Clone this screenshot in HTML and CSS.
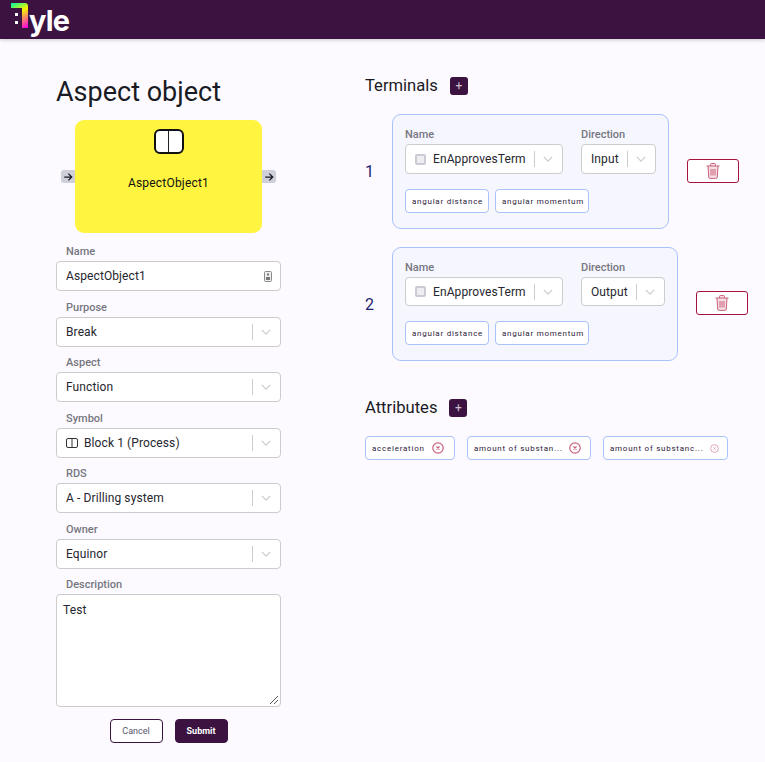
FILE: index.html
```html
<!DOCTYPE html>
<html lang="en">
<head>
  <meta charset="UTF-8" />
  <title>Aspect object</title>
  <link rel="stylesheet" href="styles.css">
</head>
<body>

  <header class="topbar">
    <div class="logo">
      <svg class="logo-mark" width="29" height="29" viewBox="0 0 29 29">
        <defs>
          <linearGradient id="logoFill" gradientUnits="userSpaceOnUse" x1="12" y1="3" x2="26" y2="28">
            <stop offset="0" stop-color="#00f59b" />
            <stop offset="0.4" stop-color="#f5f500" />
            <stop offset="1" stop-color="#ff00e0" />
          </linearGradient>
        </defs>
        <path d="M11 3h14a3 3 0 0 1 3 3v22h-6V8H11z" fill="url(#logoFill)" />
        <rect x="15" y="13" width="3" height="3" fill="#fff" />
        <rect x="15" y="21" width="3" height="3" fill="#fff" />
      </svg>
      <span class="logo-text">yle</span>
    </div>
  </header>

  <main class="page">
    <section class="left">
      <h1>Aspect object</h1>

      <div class="preview">
        <span class="port port-in"><svg width="10" height="10" viewBox="0 0 12 12"><path d="M1.5 6h9M6.5 2l4 4-4 4" class="arrow" /></svg></span>
        <div class="node">
          <span class="node-symbol"></span>
          <span class="node-name">AspectObject1</span>
        </div>
        <span class="port port-out"><svg width="10" height="10" viewBox="0 0 12 12"><path d="M1.5 6h9M6.5 2l4 4-4 4" class="arrow" /></svg></span>
      </div>

      <div class="field">
        <label>Name</label>
        <div class="control input">
          <span class="value">AspectObject1</span>
          <svg class="key-icon" width="8" height="11" viewBox="0 0 8 11"><rect x="0.5" y="0.5" width="7" height="10" rx="1" fill="#efefef" stroke="#8a8a8a" /><rect x="3" y="2.5" width="2" height="2" fill="#777" /><rect x="2" y="6" width="4" height="3" fill="#777" /></svg>
        </div>
      </div>

      <div class="field">
        <label>Purpose</label>
        <div class="control">
          <span class="value">Break</span>
          <span class="sep"></span>
          <svg class="chev" width="10" height="6" viewBox="0 0 12 7"><path d="M1 1l5 5 5-5" /></svg>
        </div>
      </div>

      <div class="field">
        <label>Aspect</label>
        <div class="control">
          <span class="value">Function</span>
          <span class="sep"></span>
          <svg class="chev" width="10" height="6" viewBox="0 0 12 7"><path d="M1 1l5 5 5-5" /></svg>
        </div>
      </div>

      <div class="field">
        <label>Symbol</label>
        <div class="control">
          <svg class="block-icon" width="12" height="10" viewBox="0 0 12 10"><rect x="0.5" y="0.5" width="11" height="9" rx="1.5" /><path d="M6 0.5v9" /></svg>
          <span class="value">Block 1 (Process)</span>
          <span class="sep"></span>
          <svg class="chev" width="10" height="6" viewBox="0 0 12 7"><path d="M1 1l5 5 5-5" /></svg>
        </div>
      </div>

      <div class="field">
        <label>RDS</label>
        <div class="control">
          <span class="value">A - Drilling system</span>
          <span class="sep"></span>
          <svg class="chev" width="10" height="6" viewBox="0 0 12 7"><path d="M1 1l5 5 5-5" /></svg>
        </div>
      </div>

      <div class="field">
        <label>Owner</label>
        <div class="control">
          <span class="value">Equinor</span>
          <span class="sep"></span>
          <svg class="chev" width="10" height="6" viewBox="0 0 12 7"><path d="M1 1l5 5 5-5" /></svg>
        </div>
      </div>

      <div class="field">
        <label>Description</label>
        <div class="control textarea">
          <span class="value">Test</span>
          <svg class="grip" width="10" height="10" viewBox="0 0 10 10"><path d="M1 9l8-8M5 9l4-4" /></svg>
        </div>
      </div>

      <div class="actions">
        <button class="btn btn-cancel">Cancel</button>
        <button class="btn btn-submit">Submit</button>
      </div>
    </section>

    <section class="right">
      <div class="section-head">
        <h2>Terminals</h2>
        <button class="add">+</button>
      </div>

      <div class="terminal">
        <span class="index">1</span>
        <div class="terminal-card">
          <div class="terminal-fields">
            <div class="tfield tfield-name">
              <label>Name</label>
              <div class="control">
                <span class="term-icon"></span>
                <span class="value">EnApprovesTerm</span>
                <span class="sep"></span>
                <svg class="chev" width="10" height="6" viewBox="0 0 12 7"><path d="M1 1l5 5 5-5" /></svg>
              </div>
            </div>
            <div class="tfield tfield-dir">
              <label>Direction</label>
              <div class="control">
                <span class="value">Input</span>
                <span class="sep"></span>
                <svg class="chev" width="10" height="6" viewBox="0 0 12 7"><path d="M1 1l5 5 5-5" /></svg>
              </div>
            </div>
          </div>
          <div class="chips">
            <span class="chip chip-a">angular distance</span>
            <span class="chip chip-b">angular momentum</span>
          </div>
        </div>
        <button class="trash">
          <svg width="14" height="16" viewBox="0 0 14 16"><path d="M0.5 3h13M4.5 3V1.5a1 1 0 0 1 1-1h3a1 1 0 0 1 1 1V3M2 3l0.7 11a1.5 1.5 0 0 0 1.5 1.4h5.6a1.5 1.5 0 0 0 1.5-1.4L12 3M5 6v6.5M7 6v6.5M9 6v6.5" /></svg>
        </button>
      </div>

      <div class="terminal">
        <span class="index">2</span>
        <div class="terminal-card wide">
          <div class="terminal-fields">
            <div class="tfield tfield-name">
              <label>Name</label>
              <div class="control">
                <span class="term-icon"></span>
                <span class="value">EnApprovesTerm</span>
                <span class="sep"></span>
                <svg class="chev" width="10" height="6" viewBox="0 0 12 7"><path d="M1 1l5 5 5-5" /></svg>
              </div>
            </div>
            <div class="tfield tfield-dir">
              <label>Direction</label>
              <div class="control">
                <span class="value">Output</span>
                <span class="sep"></span>
                <svg class="chev" width="10" height="6" viewBox="0 0 12 7"><path d="M1 1l5 5 5-5" /></svg>
              </div>
            </div>
          </div>
          <div class="chips">
            <span class="chip chip-a">angular distance</span>
            <span class="chip chip-b">angular momentum</span>
          </div>
        </div>
        <button class="trash">
          <svg width="14" height="16" viewBox="0 0 14 16"><path d="M0.5 3h13M4.5 3V1.5a1 1 0 0 1 1-1h3a1 1 0 0 1 1 1V3M2 3l0.7 11a1.5 1.5 0 0 0 1.5 1.4h5.6a1.5 1.5 0 0 0 1.5-1.4L12 3M5 6v6.5M7 6v6.5M9 6v6.5" /></svg>
        </button>
      </div>

      <div class="section-head attributes-head">
        <h2>Attributes</h2>
        <button class="add">+</button>
      </div>

      <div class="attributes">
        <span class="chip attr attr-1">
          <span class="attr-name">acceleration</span>
          <svg width="12" height="12" viewBox="0 0 12 12"><circle cx="6" cy="6" r="5.2" /><path d="M4.5 4.5l3 3M7.5 4.5l-3 3" /></svg>
        </span>
        <span class="chip attr attr-2">
          <span class="attr-name">amount of substan...</span>
          <svg width="12" height="12" viewBox="0 0 12 12"><circle cx="6" cy="6" r="5.2" /><path d="M4.5 4.5l3 3M7.5 4.5l-3 3" /></svg>
        </span>
        <span class="chip attr attr-3">
          <span class="attr-name">amount of substanc...</span>
          <svg class="small" width="9" height="9" viewBox="0 0 12 12"><circle cx="6" cy="6" r="5.2" /><path d="M4.5 4.5l3 3M7.5 4.5l-3 3" /></svg>
        </span>
      </div>
    </section>
  </main>

</body>
</html>
```

FILE: styles.css
```css
* {
  box-sizing: border-box;
}

body {
  margin: 0;
  font-family: Roboto, Arial, sans-serif;
  background-color: #fcfaff;
  color: #1d1b20;
}

.topbar {
  height: 39px;
  background-color: #3b1240;
  box-shadow: 0 1px 4px rgba(0,0,0,0.2);
}

.logo {
  display: flex;
  align-items: flex-start;
  height: 39px;
  overflow: hidden;
}

.logo-mark {
  flex: none;
}

.logo-text {
  margin-top: 3px;
  font-family: Inter, Roboto, sans-serif;
  font-size: 29px;
  font-weight: 700;
  line-height: 36px;
  letter-spacing: -0.8px;
  color: #fff;
}

.page {
  display: flex;
  padding: 36px 0 0 56px;
}

.left {
  width: 225px;
  flex: none;
}

.right {
  margin-left: 84px;
  flex: none;
  width: 400px;
}

h1 {
  margin: 1px 0 0;
  font-size: 27px;
  font-weight: 400;
  line-height: 33px;
  color: #1a1a24;
}

h2 {
  margin: 0;
  font-size: 16.6px;
  font-weight: 400;
  line-height: 20px;
  color: #1a1a24;
}

.preview {
  display: flex;
  align-items: center;
  margin: 11px 0 0 5px;
  height: 113px;
}

.node {
  width: 187px;
  height: 113px;
  background-color: #fff540;
  border-radius: 9px;
  display: flex;
  flex-direction: column;
  align-items: center;
  padding-top: 9px;
}

.node-symbol {
  width: 30px;
  height: 25px;
  border: 2px solid #111;
  border-radius: 6px;
  background: linear-gradient(#222, #222) center / 1px 100% no-repeat #fff;
}

.node-name {
  margin-top: 21px;
  font-size: 12px;
  font-weight: 400;
  letter-spacing: 0.2px;
  line-height: 16px;
  color: #111;
}

.port {
  width: 14px;
  height: 13px;
  background-color: #cfcfd9;
  display: flex;
  align-items: center;
  justify-content: center;
}

.port-in {
  border-radius: 3px 0 0 3px;
}

.port-out {
  border-radius: 0 3px 3px 0;
}

.arrow {
  fill: none;
  stroke: #1a1a24;
  stroke-width: 1.5;
}

.field {
  margin-top: 8.5px;
}

.preview + .field {
  margin-top: 11px;
}

.field label {
  display: block;
  padding-left: 10px;
  margin-bottom: 1px;
  font-size: 11px;
  font-weight: 500;
  line-height: 16px;
  color: #77777f;
}

.tfield label {
  display: block;
  margin-bottom: 1px;
  font-size: 11px;
  font-weight: 500;
  line-height: 16px;
  color: #77777f;
}

.control {
  display: flex;
  align-items: center;
  height: 30px;
  padding: 0 8px 0 9px;
  background: #fff;
  border: 1px solid #cccccc;
  border-radius: 4px;
  font-size: 12px;
  letter-spacing: 0.1px;
  color: #26262e;
}

.value {
  flex: 1;
  white-space: nowrap;
}

.sep {
  width: 1px;
  height: 16px;
  margin: 0 8px 0 6px;
  background-color: #cccccc;
}

.chev {
  flex: none;
  margin-right: 1px;
}

.chev path {
  fill: none;
  stroke: #cccccc;
  stroke-width: 1.5;
}

.key-icon {
  flex: none;
}

.block-icon {
  flex: none;
  margin-right: 6px;
}

.block-icon rect,
.block-icon path {
  fill: none;
  stroke: #333;
}

.textarea {
  position: relative;
  align-items: flex-start;
  height: 113px;
  padding: 8px 6px;
}

.grip {
  position: absolute;
  right: 1px;
  bottom: 1px;
}

.grip path {
  fill: none;
  stroke: #555;
}

.actions {
  display: flex;
  justify-content: center;
  gap: 12px;
  margin-top: 12px;
}

.btn {
  width: 53px;
  height: 24px;
  padding: 0;
  border-radius: 4px;
  font-family: inherit;
  font-size: 9px;
  cursor: pointer;
}

.btn-cancel {
  background: #fff;
  border: 1px solid #3b1240;
  color: #55556a;
}

.btn-submit {
  background-color: #3b1240;
  border: 1px solid #3b1240;
  color: #fff;
  font-weight: 700;
}

.section-head {
  display: flex;
  align-items: center;
  gap: 12px;
  height: 18px;
  margin-top: 2px;
}

.attributes-head {
  margin-top: 38px;
}

.add {
  width: 18px;
  height: 18px;
  padding: 0;
  border: none;
  border-radius: 3px;
  background-color: #3b1240;
  color: #cdbfd0;
  font-family: inherit;
  font-size: 12px;
  line-height: 18px;
}

.terminal {
  display: flex;
  align-items: center;
  margin-top: 18px;
}

.section-head + .terminal {
  margin-top: 19px;
}

.index {
  width: 27px;
  flex: none;
  font-size: 16px;
  color: #1e1e6e;
}

.terminal-card {
  width: 277px;
  height: 115px;
  padding: 12px 12px 0;
  background-color: #f6f6ff;
  border: 1px solid #a9c2fa;
  border-radius: 9px;
}

.terminal-card.wide {
  width: 286px;
  height: 114px;
}

.terminal-card.wide .control {
  height: 29px;
}

.terminal-card.wide .chips {
  margin-top: 15px;
}

.terminal-fields {
  display: flex;
  gap: 18px;
}

.tfield-name {
  width: 158px;
  flex: none;
}

.tfield-dir {
  flex: 1;
}

.term-icon {
  flex: none;
  width: 11px;
  height: 11px;
  margin-right: 7px;
  border-radius: 2px;
  background-color: #eeeef2;
  border: 2.5px solid #cbcbd6;
}

.chips {
  display: flex;
  gap: 6px;
  margin-top: 15px;
}

.chip {
  display: flex;
  align-items: center;
  height: 24px;
  padding: 0 6px;
  background: #fff;
  border: 1px solid #a9c2fa;
  border-radius: 4px;
  font-size: 8px;
  font-weight: 400;
  letter-spacing: 0.75px;
  white-space: nowrap;
  color: #2d1a3a;
}

.chip-a {
  width: 84px;
}

.chip-b {
  width: 94px;
}

.trash {
  width: 52px;
  height: 24px;
  margin-left: 18px;
  margin-bottom: 2px;
  padding: 0;
  display: flex;
  align-items: center;
  justify-content: center;
  background: #fff;
  border: 1px solid #a8123e;
  border-radius: 3px;
}

.trash path {
  fill: #f5dfe4;
  stroke: #c9617c;
  stroke-width: 1;
}

.attributes {
  display: flex;
  gap: 12px;
  margin-top: 19px;
}

.attr {
  justify-content: space-between;
}

.attr svg {
  flex: none;
}

.attr circle,
.attr path {
  fill: none;
  stroke: #c9617c;
  stroke-width: 1.2;
}

.attr .small circle,
.attr .small path {
  stroke: #de9db0;
}

.attr-1 {
  width: 90px;
  padding-right: 10px;
}

.attr-2 {
  width: 124px;
  padding-right: 9px;
}

.attr-3 {
  width: 125px;
  padding-right: 8px;
}
```
